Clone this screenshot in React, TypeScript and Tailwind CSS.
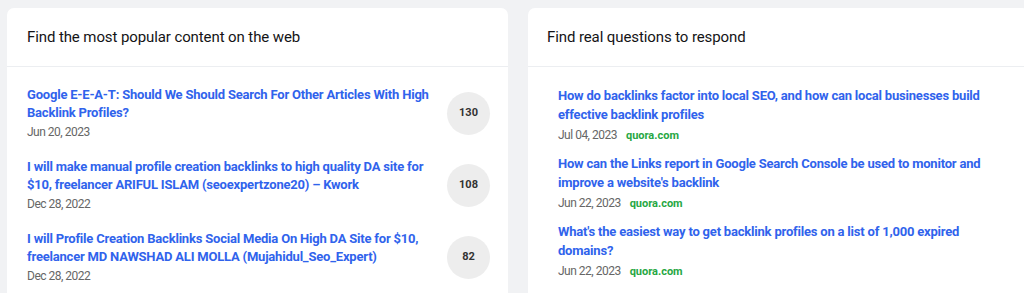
import React from "react";

const popular = [
  {
    title: "Google E-E-A-T: Should We Should Search For Other Articles With High Backlink Profiles?",
    date: "Jun 20, 2023",
    count: 130,
  },
  {
    title: "I will make manual profile creation backlinks to high quality DA site for $10, freelancer ARIFUL ISLAM (seoexpertzone20) – Kwork",
    date: "Dec 28, 2022",
    count: 108,
  },
  {
    title: "I will Profile Creation Backlinks Social Media On High DA Site for $10, freelancer MD NAWSHAD ALI MOLLA (Mujahidul_Seo_Expert)",
    date: "Dec 28, 2022",
    count: 82,
  },
];

const questions = [
  {
    title: "How do backlinks factor into local SEO, and how can local businesses build effective backlink profiles",
    date: "Jul 04, 2023",
  },
  {
    title: "How can the Links report in Google Search Console be used to monitor and improve a website's backlink",
    date: "Jun 22, 2023",
  },
  {
    title: "What's the easiest way to get backlink profiles on a list of 1,000 expired domains?",
    date: "Jun 22, 2023",
  },
];

export default function App() {
  return (
    <div
      className="w-[1024px] h-[293px] overflow-hidden bg-[#f1f2f4] flex items-start gap-[20px] pl-[7px] pt-[8px]"
      style={{ fontFamily: "Roboto, 'Liberation Sans', sans-serif" }}
    >
      <div className="w-[501px] h-[330px] shrink-0 bg-white rounded-[7px] flex flex-col">
        <div className="h-[59px] shrink-0 flex items-center pl-[20px] border-b border-[#eceef1]">
          <h2 className="text-[15px] text-[#141416] font-normal tracking-[-0.1px] whitespace-nowrap">
            Find the most popular content on the web
          </h2>
        </div>
        <div className="flex flex-col gap-[17px] pt-[19px] pl-[20px] pr-[18px]">
          {popular.map((p) => (
            <div key={p.count} className="flex items-center gap-[10px]">
              <div className="flex-1 min-w-0">
                <a className="block text-[13px] leading-[18px] font-bold tracking-[-0.2px] text-[#3063ec]">
                  {p.title}
                </a>
                <div className="mt-[1px] text-[12px] leading-[18px] tracking-[-0.5px] text-[#666]">{p.date}</div>
              </div>
              <div className="w-[43px] h-[43px] shrink-0 rounded-full bg-[#ededed] flex items-center justify-center text-[11px] font-bold text-[#333]">
                {p.count}
              </div>
            </div>
          ))}
        </div>
      </div>
      <div className="w-[501px] h-[330px] shrink-0 bg-white rounded-[7px] flex flex-col">
        <div className="h-[59px] shrink-0 flex items-center pl-[19px] border-b border-[#eceef1]">
          <h2 className="text-[15px] text-[#141416] font-normal tracking-[-0.1px] whitespace-nowrap">
            Find real questions to respond
          </h2>
        </div>
        <div className="flex flex-col gap-[9px] pt-[19px] px-[30px]">
          {questions.map((q, i) => (
            <div key={i}>
              <a className="block text-[13px] leading-[19px] font-bold tracking-[-0.2px] text-[#3063ec]">
                {q.title}
              </a>
              <div className="flex items-center gap-[9px] mt-[2px] leading-[19px]">
                <span className="text-[12px] tracking-[-0.5px] text-[#666]">{q.date}</span>
                <span className="text-[11px] font-bold text-[#27a744]">quora.com</span>
              </div>
            </div>
          ))}
        </div>
      </div>
    </div>
  );
}
